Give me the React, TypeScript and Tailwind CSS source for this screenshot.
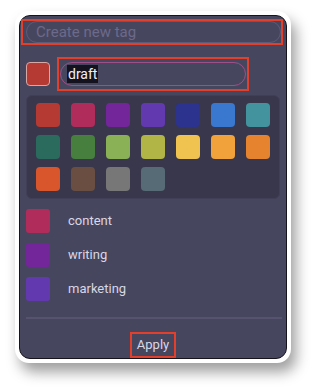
import React from "react";

const palette = [
  "#b43a33", "#b02c5b", "#73269a", "#6339b0", "#2b338f", "#3a78d0", "#43939f",
  "#2a6b5e", "#467f3e", "#8bb156", "#b0b545", "#f0c350", "#f1a23a", "#e6832f",
  "#d9552c", "#6a4e42", "#777777", "#566b76",
];

const tags = [
  { name: "content", color: "#b02c5b" },
  { name: "writing", color: "#73269a" },
  { name: "marketing", color: "#6339b0" },
];

export default function App() {
  return (
    <div
      className="w-[313px] h-[391px] bg-white pt-[11px] pl-[15px]"
      style={{ fontFamily: "Roboto, 'Noto Sans', sans-serif" }}
    >
      <div className="w-[276px] rounded-[14px] bg-white p-[4px] shadow-[5px_9px_14px_rgba(0,0,0,0.38)]">
        <div className="relative w-[268px] h-[344px] rounded-[11px] border border-[#15141c] bg-[#47465f] flex flex-col">
          {/* create new tag */}
          <div className="mt-[3px] ml-[1px] w-[262px] h-[26px] border-2 border-[#e3402c] flex items-center pl-[3px] pr-0">
            <div className="w-full h-[22px] rounded-full border border-[#5d5b78] flex items-center pl-[9px] text-[15px] text-[#6c6a8a]">
              Create new tag
            </div>
          </div>

          {/* draft row */}
          <div className="mt-[12px] flex items-center">
            <div className="ml-[6px] w-[24px] h-[24px] rounded-[4px] bg-[#b43a33] border border-[#d7a7a6]" />
            <div className="ml-[7px] w-[192px] h-[34px] border-2 border-[#e3402c] flex items-center px-[1px]">
              <div className="w-full h-[24px] rounded-full border border-[#9e4f86] flex items-center pl-[6px]">
                <span className="bg-[#14121f] text-[#f1eff6] text-[14px] leading-[18px] px-[1px]">draft</span>
              </div>
            </div>
          </div>

          {/* palette */}
          <div className="mt-[4px] ml-[6px] w-[254px] rounded-[6px] bg-[#38374c] border border-[#413f57] pt-[7px] pb-[7px] pl-[9px]">
            <div className="grid grid-cols-[repeat(7,24px)] gap-x-[11px] gap-y-[8px]">
              {palette.map((c) => (
                <div key={c} className="w-[24px] h-[24px] rounded-[4px]" style={{ backgroundColor: c }} />
              ))}
            </div>
          </div>

          {/* tag list */}
          <div className="mt-[10px] flex flex-col gap-[10px]">
            {tags.map((t) => (
              <div key={t.name} className="flex items-center h-[24px]">
                <div className="ml-[6px] w-[24px] h-[24px] rounded-[3px]" style={{ backgroundColor: t.color }} />
                <span className="ml-[18px] text-[13px] text-[#d9d7e4]">{t.name}</span>
              </div>
            ))}
          </div>

          {/* divider */}
          <div className="mt-[16px] ml-[6px] w-[256px] h-[2px] bg-[#55536e]" />

          {/* apply */}
          <div className="mt-auto flex justify-center">
            <div className="w-[46px] h-[26px] border-2 border-[#e3402c] flex items-center justify-center text-[13px] text-[#d9d7e4]">
              Apply
            </div>
          </div>
        </div>
      </div>
    </div>
  );
}
